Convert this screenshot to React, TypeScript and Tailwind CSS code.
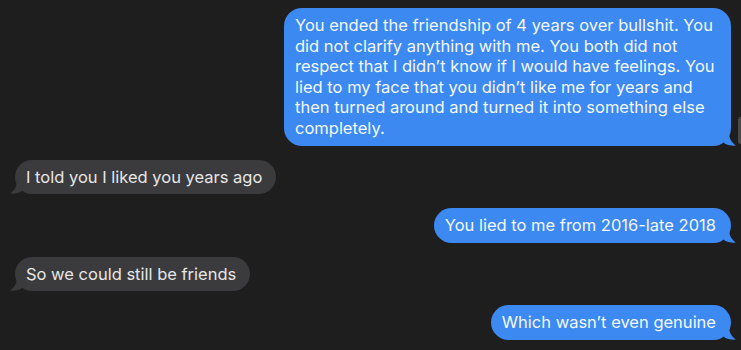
import React from "react";

type Msg = { text: string; mine: boolean };

const messages: Msg[] = [
  {
    text: "You ended the friendship of 4 years over bullshit. You did not clarify anything with me. You both did not respect that I didn’t know if I would have feelings. You lied to my face that you didn’t like me for years and then turned around and turned it into something else completely.",
    mine: true,
  },
  { text: "I told you I liked you years ago", mine: false },
  { text: "You lied to me from 2016-late 2018", mine: true },
  { text: "So we could still be friends", mine: false },
  { text: "Which wasn’t even genuine", mine: true },
];

const Tail = ({ mine }: { mine: boolean }) => {
  const fill = mine ? "#3b89f1" : "#3b3b3d";
  if (mine) {
    return (
      <svg
        className="absolute bottom-0 right-[-6px]"
        width="14"
        height="14"
        viewBox="0 0 14 14"
      >
        <path d="M0 0 L6 0 C6 6 8 10 13 13.6 C8 14 4 13 1 11 Z" fill={fill} />
      </svg>
    );
  }
  return (
    <svg
      className="absolute bottom-0 left-[-6px]"
      width="14"
      height="14"
      viewBox="0 0 14 14"
    >
      <path d="M14 0 L8 0 C8 6 6 10 1 13.6 C6 14 10 13 13 11 Z" fill={fill} />
    </svg>
  );
};

const Bubble = ({ msg }: { msg: Msg }) => (
  <div className={msg.mine ? "flex justify-end" : "flex justify-start"}>
    <div
      className={
        msg.mine
          ? "relative max-w-[447px] rounded-[18px] bg-[#3b89f1] py-[7px] pl-[11px] pr-[15px] text-[#f4f7fc]"
          : "relative max-w-[444px] rounded-[18px] bg-[#3b3b3d] py-[7px] pl-[11px] pr-[14px] text-[#e6e6e6]"
      }
    >
      <Tail mine={msg.mine} />
      <p className="relative text-[16.5px] leading-[20.6px]">{msg.text}</p>
    </div>
  </div>
);

export default function App() {
  return (
    <div
      className="relative h-[350px] w-[741px] overflow-hidden bg-[#1e1e1e]"
      style={{ fontFamily: "Inter, 'Liberation Sans', sans-serif" }}
    >
      <div className="flex flex-col gap-[14px] pl-[15px] pr-[10px] pt-[8px]">
        {messages.map((m, i) => (
          <Bubble key={i} msg={m} />
        ))}
      </div>
      <div className="absolute right-0 top-[117px] h-[27px] w-[3px] rounded-l-sm bg-[#4a4a4a]" />
    </div>
  );
}
